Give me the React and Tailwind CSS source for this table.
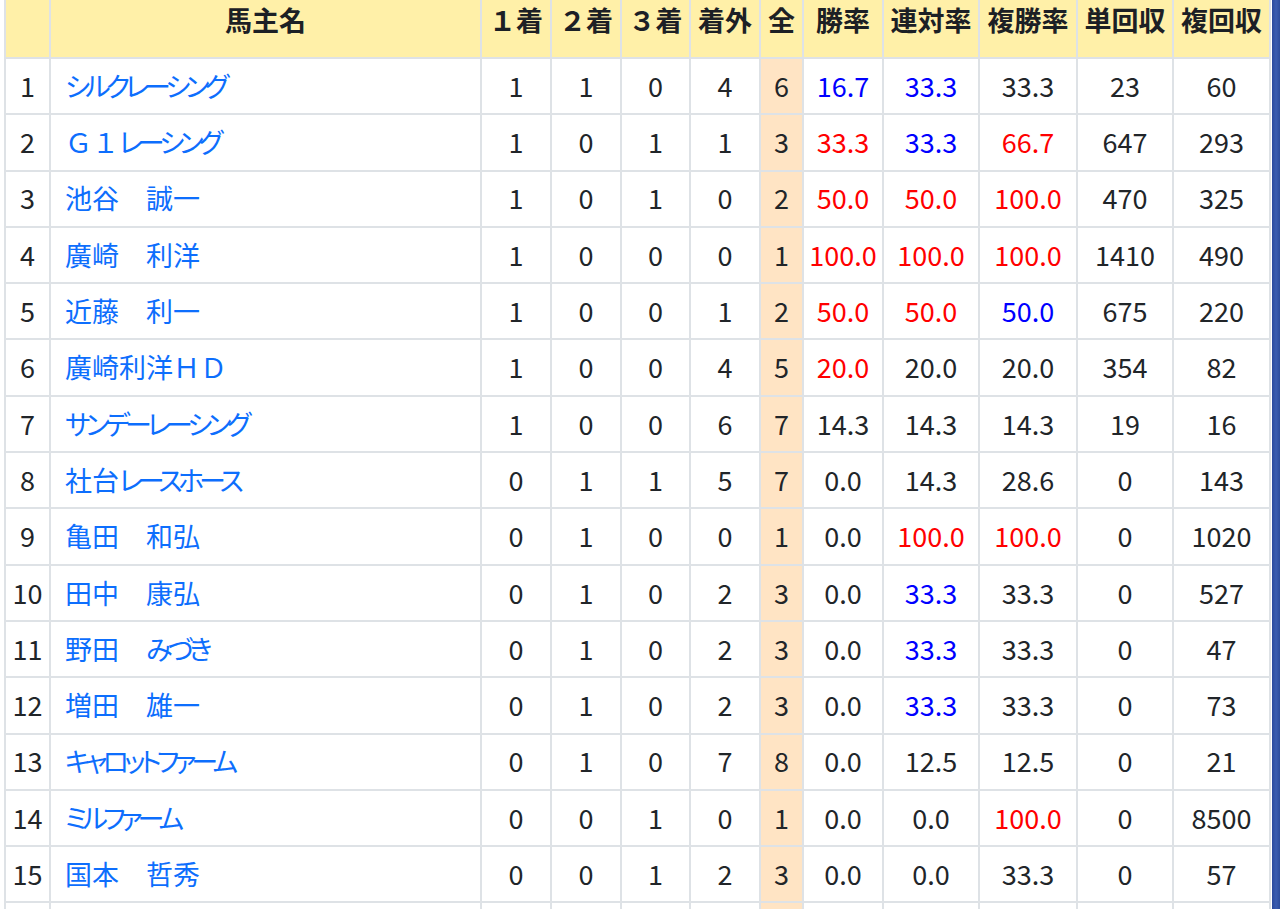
import React from 'react';

const R = 'text-[#ff0000]';
const B = 'text-[#0000ff]';

// [name, 1着, 2着, 3着, 着外, 全, [勝率, color], [連対率, color], [複勝率, color], 単回収, 複回収]
const rows = [
  ['シルクレーシング', 1, 1, 0, 4, 6, ['16.7', B], ['33.3', B], ['33.3', ''], 23, 60],
  ['Ｇ１レーシング', 1, 0, 1, 1, 3, ['33.3', R], ['33.3', B], ['66.7', R], 647, 293],
  ['池谷　誠一', 1, 0, 1, 0, 2, ['50.0', R], ['50.0', R], ['100.0', R], 470, 325],
  ['廣崎　利洋', 1, 0, 0, 0, 1, ['100.0', R], ['100.0', R], ['100.0', R], 1410, 490],
  ['近藤　利一', 1, 0, 0, 1, 2, ['50.0', R], ['50.0', R], ['50.0', B], 675, 220],
  ['廣崎利洋ＨＤ', 1, 0, 0, 4, 5, ['20.0', R], ['20.0', ''], ['20.0', ''], 354, 82],
  ['サンデーレーシング', 1, 0, 0, 6, 7, ['14.3', ''], ['14.3', ''], ['14.3', ''], 19, 16],
  ['社台レースホース', 0, 1, 1, 5, 7, ['0.0', ''], ['14.3', ''], ['28.6', ''], 0, 143],
  ['亀田　和弘', 0, 1, 0, 0, 1, ['0.0', ''], ['100.0', R], ['100.0', R], 0, 1020],
  ['田中　康弘', 0, 1, 0, 2, 3, ['0.0', ''], ['33.3', B], ['33.3', ''], 0, 527],
  ['野田　みづき', 0, 1, 0, 2, 3, ['0.0', ''], ['33.3', B], ['33.3', ''], 0, 47],
  ['増田　雄一', 0, 1, 0, 2, 3, ['0.0', ''], ['33.3', B], ['33.3', ''], 0, 73],
  ['キャロットファーム', 0, 1, 0, 7, 8, ['0.0', ''], ['12.5', ''], ['12.5', ''], 0, 21],
  ['ミルファーム', 0, 0, 1, 0, 1, ['0.0', ''], ['0.0', ''], ['100.0', R], 0, 8500],
  ['国本　哲秀', 0, 0, 1, 2, 3, ['0.0', ''], ['0.0', ''], ['33.3', ''], 0, 57],
];

const widths = [45, 431, 70, 70, 69, 70, 43, 80, 96, 98, 96, 97];
const heads = ['', '馬主名', '１着', '２着', '３着', '着外', '全', '勝率', '連対率', '複勝率', '単回収', '複回収'];

const cell = 'border-2 border-[#dee2e6] text-center align-middle p-0';

// kana runs get proportional widths and a tighter fit, kanji / full-width latin stay monospaced
function Name({ text }) {
  const parts = text.split(/([\u3040-\u30ff]+)/).filter(Boolean);
  return parts.map((p, i) =>
    /[\u3040-\u30ff]/.test(p) ? (
      <span key={i} className="[font-feature-settings:'palt'] tracking-[-4.8px]">
        {p}
      </span>
    ) : (
      <span key={i}>{p}</span>
    )
  );
}

export default function App() {
  return (
    <div className="flex h-screen overflow-hidden bg-white font-['Noto_Sans_CJK_JP',sans-serif] text-[27px] text-[#212529]">
      <div className="flex-1 overflow-hidden pl-[4px]">
        <table className="table-fixed border-collapse">
          <colgroup>
            {widths.map((w, i) => (
              <col key={i} style={{ width: w }} />
            ))}
          </colgroup>
          <thead>
            <tr className="h-[58px] bg-[#fff0a8]">
              {heads.map((h, i) => (
                <th
                  key={i}
                  className={`${cell} border-t-0 align-top pt-[2px] font-bold leading-[36px] text-[#1c2025] whitespace-nowrap`}
                >
                  {h}
                </th>
              ))}
            </tr>
          </thead>
          <tbody>
            {rows.map((r, i) => (
              <tr key={i} className="h-[56.3px]">
                <td className={cell}>{i + 1}</td>
                <td className={`${cell} text-left pl-[14px] text-[#0d6efd]`}>
                  <Name text={r[0]} />
                </td>
                <td className={cell}>{r[1]}</td>
                <td className={cell}>{r[2]}</td>
                <td className={cell}>{r[3]}</td>
                <td className={cell}>{r[4]}</td>
                <td className={`${cell} bg-[#ffe4c4]`}>{r[5]}</td>
                <td className={`${cell} ${r[6][1]}`}>{r[6][0]}</td>
                <td className={`${cell} ${r[7][1]}`}>{r[7][0]}</td>
                <td className={`${cell} ${r[8][1]}`}>{r[8][0]}</td>
                <td className={cell}>{r[9]}</td>
                <td className={cell}>{r[10]}</td>
              </tr>
            ))}
            <tr className="h-[56.3px]">
              {widths.map((w, i) => (
                <td key={i} className={`${cell} ${i === 6 ? 'bg-[#ffe4c4]' : ''}`} />
              ))}
            </tr>
          </tbody>
        </table>
      </div>
      <div className="w-[8px] shrink-0 bg-gradient-to-r from-[#2a4a9e] via-[#3a5cb0] to-[#2c4c9c]" />
    </div>
  );
}
